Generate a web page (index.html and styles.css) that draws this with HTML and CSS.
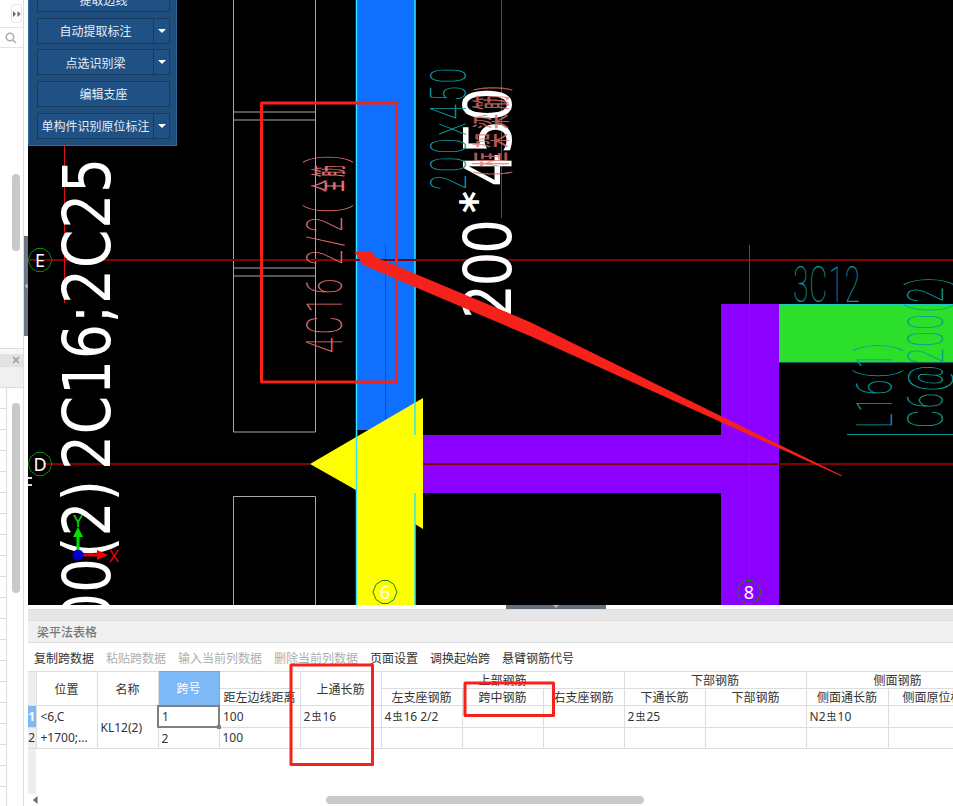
FILE: index.html
```html
<!DOCTYPE html>
<html lang="zh">
<head>
<meta charset="utf-8">
<title>梁平法表格</title>
<link rel="stylesheet" href="styles.css">
</head>
<body>
<div class="app">
  <aside class="side">
    <div class="side-col">
      <div class="pane-top">
        <div class="tool-row"><span class="expand"><svg width="8" height="6" viewBox="0 0 8 6"><path d="M0 0l3 3-3 3zM4.500 0l3 3-3 3z" fill="#666"/></svg></span></div>
        <div class="search-row"><svg width="12" height="12" viewBox="0 0 12 12"><circle cx="5" cy="5" r="3.800" fill="none" stroke="#aaa" stroke-width="1.500"/><path d="M8 8l3 3" stroke="#aaa" stroke-width="1.500"/></svg></div>
        <div class="thumb thumb-a"></div>
      </div>
      <div class="pane-gap"></div>
      <div class="pane-head"><svg width="8" height="8" viewBox="0 0 8 8"><path d="M1 1l6 6M7 1l-6 6" stroke="#999" stroke-width="1.500"/></svg></div>
      <div class="pane-sub"></div>
      <div class="pane-list">
        <div class="list-rows"></div>
        <div class="thumb thumb-b"></div>
      </div>
    </div>
    <div class="side-gutter"><div class="gutter-handle"><svg width="4" height="8" viewBox="0 0 4 8"><path d="M3.500 1L1 4l2.500 3z" fill="#c5ccd3"/></svg></div></div>
  </aside>

  <main class="main">
    <section class="canvas">
      <svg class="cad" viewBox="28 0 925 605" width="925" height="605">
        <!-- grey outlines -->
        <g class="outline">
          <path d="M233.500 0V432H315.500V0"/>
          <path d="M233.500 112H315.500M233.500 120H315.500M233.500 268H315.500M233.500 276H315.500"/>
          <path d="M233.500 605V496.500H315.500V605"/>
        </g>
        <!-- structural fills -->
        <rect x="356" y="0" width="59" height="430" fill="#0f70ff"/>
        <rect x="721" y="304" width="58" height="301" fill="#8b00ff"/>
        <rect x="423" y="435" width="298" height="58" fill="#8b00ff"/>
        <rect x="779" y="304" width="174" height="58" fill="#2bdf2b"/>
        <path d="M779 304.500H953M779 362H953" stroke="#19c8b8"/>
        <path d="M385.500 245V425" stroke="#c01030"/>
        <path d="M310 464L423 398V529L415 524V605H356V490Z" fill="#ffff00"/>
        <path d="M356.500 0V605M415 0V435M415 493V605" stroke="#2fe6ff" stroke-width="1.500"/>
        <!-- axis lines -->
        <path d="M28 260H953" stroke="#850000" stroke-width="2"/>
        <path d="M43 464H310M423 464H953" stroke="#850000" stroke-width="2"/>
        <path d="M64.500 0V303M501.500 0V218M749.500 245V605" stroke="#e01010" fill="none"/>
        <!-- big white labels -->
        <text class="big" transform="translate(110 470) rotate(-90) scale(1 1.200)" textLength="312">2C16;2C25</text>
        <text class="big" transform="translate(110 628) rotate(-90) scale(1 1.200)" textLength="148">00(2)</text>
        <rect x="28" y="477" width="4" height="2" fill="#ddd"/><rect x="28" y="484" width="4" height="2" fill="#ddd"/>
        <text class="big" transform="translate(511 319) rotate(-90) scale(1 1.200)" textLength="100">200</text>
        <text class="star" transform="translate(491 213) rotate(-90)">*</text>
        <text class="big" transform="translate(511 187) rotate(-90) scale(1 1.200)" textLength="100">450</text>
        <!-- thin CAD labels -->
        <text class="thin teal" transform="translate(466 190) rotate(-90) scale(1 1.800)" textLength="122">200x450</text>
        <text class="thin pink" transform="translate(342 353) rotate(-90) scale(1 1.800)" textLength="148">4C16 2/2(</text>
        <text class="cjk pink" transform="translate(342 192) rotate(-90) scale(1 3)" textLength="27">全筋</text>
        <text class="thin pink" transform="translate(342 163) rotate(-90) scale(1 1.800)">)</text>
        <text class="cjk-s pink soft" transform="translate(505 176) rotate(-90) scale(1 2.600)" textLength="90">(框架梁筋)</text>
        <text class="thin teal" transform="translate(793 302) scale(1 1.800)" textLength="67">3C12</text>
        <text class="thin teal" transform="translate(892 428) rotate(-90) scale(1 1.800)" textLength="85">L16(1)</text>
        <text class="thin teal" transform="translate(943 428) rotate(-90) scale(1 1.800)" textLength="151">C6@200(2)</text>
        <path d="M847 434.500H953" stroke="#0a9090"/>
        <!-- axis bubbles -->
        <g class="bubble">
          <polygon points="52,260 49,267.500 43,271.500 37,271.500 31,267.500 28,260 31,252.500 37,248.500 43,248.500 49,252.500"/>
          <polygon points="52,464 49,471.500 43,475.500 37,475.500 31,471.500 28,464 31,456.500 37,452.500 43,452.500 49,456.500"/>
          <polygon points="397,592 394,599.500 388,603.500 382,603.500 376,599.500 373,592 376,584.500 382,580.500 388,580.500 394,584.500"/>
          <polygon points="761,592 758,599.500 752,603.500 746,603.500 740,599.500 737,592 740,584.500 746,580.500 752,580.500 758,584.500"/>
        </g>
        <text class="bubble-t" x="40" y="267">E</text>
        <text class="bubble-t" x="40" y="471">D</text>
        <text class="bubble-t" x="385" y="599">6</text>
        <text class="bubble-t" x="749" y="599">8</text>
        <!-- UCS gizmo -->
        <path d="M76.500 555V535H79.500V555Z" fill="#00e000"/>
        <path d="M78 527L83 537H73Z" fill="#00e000"/>
        <path d="M78 553.500H98V556.500H78Z" fill="#f00000"/>
        <path d="M108 555L97 550V560Z" fill="#f00000"/>
        <circle cx="78" cy="555" r="5.500" fill="#0000c8"/>
        <text class="ucs green" x="78" y="527">Y</text>
        <text class="ucs red" x="114" y="562">X</text>
      </svg>

      <div class="float-panel">
        <div class="fp-row"><button class="fp-btn">提取边线</button></div>
        <div class="fp-row"><button class="fp-btn">自动提取标注</button><button class="fp-drop"><span class="caret"></span></button></div>
        <div class="fp-row"><button class="fp-btn">点选识别梁</button><button class="fp-drop"><span class="caret"></span></button></div>
        <div class="fp-row"><button class="fp-btn">编辑支座</button></div>
        <div class="fp-row"><button class="fp-btn">单构件识别原位标注</button><button class="fp-drop"><span class="caret"></span></button></div>
      </div>
    </section>

    <div class="split-strip"><div class="split-handle"><span class="split-caret"></span></div></div>

    <section class="panel">
      <div class="panel-band"></div>
      <div class="panel-title">梁平法表格</div>
      <div class="panel-tools">
        <span>复制跨数据</span><span class="off">粘贴跨数据</span><span class="off">输入当前列数据</span><span class="off">删除当前列数据</span><span>页面设置</span><span>调换起始跨</span><span>悬臂钢筋代号</span>
      </div>
      <div class="grid-wrap">
        <table class="grid">
          <colgroup>
            <col class="c-n"><col class="c-a"><col class="c-a"><col class="c-a"><col class="c-b"><col class="c-b"><col class="c-b"><col class="c-b"><col class="c-b"><col class="c-b"><col class="c-c"><col class="c-d"><col class="c-e">
          </colgroup>
          <tr class="r-h">
            <th class="rn" rowspan="2"></th>
            <th rowspan="2">位置</th>
            <th rowspan="2">名称</th>
            <th rowspan="2" class="sel-head">跨号</th>
            <th></th>
            <th rowspan="2">上通长筋</th>
            <th colspan="3">上部钢筋</th>
            <th colspan="2">下部钢筋</th>
            <th colspan="2">侧面钢筋</th>
          </tr>
          <tr class="r-h">
            <th>距左边线距离</th>
            <th>左支座钢筋</th>
            <th>跨中钢筋</th>
            <th>右支座钢筋</th>
            <th>下通长筋</th>
            <th>下部钢筋</th>
            <th>侧面通长筋</th>
            <th>侧面原位标注</th>
          </tr>
          <tr class="r-d">
            <td class="rn rn-on">1</td>
            <td rowspan="2" class="pos">&lt;6,C<br>+1700;...</td>
            <td rowspan="2">KL12(2)</td>
            <td class="cur">1<span class="fill-h"></span></td>
            <td>100</td>
            <td>2<span class="bar">虫</span>16</td>
            <td>4<span class="bar">虫</span>16 2/2</td>
            <td></td><td></td>
            <td>2<span class="bar">虫</span>25</td>
            <td></td>
            <td>N2<span class="bar">虫</span>10</td>
            <td></td>
          </tr>
          <tr class="r-d">
            <td class="rn">2</td>
            <td>2</td>
            <td>100</td>
            <td></td><td></td><td></td><td></td><td></td><td></td><td></td><td></td>
          </tr>
        </table>
        <div class="grid-fill"></div>
      </div>
      <div class="hscroll">
        <svg width="5" height="8" viewBox="0 0 5 8"><path d="M4.500 0L0 4l4.500 4z" fill="#5b6b7b"/></svg>
        <div class="hthumb"></div>
      </div>
    </section>
  </main>

  <svg class="marks" viewBox="0 0 953 806" width="953" height="806">
    <g class="mark-box">
      <rect x="261.500" y="103" width="135" height="279"/>
      <rect x="291" y="665" width="81.500" height="99.500"/>
      <rect x="465" y="683" width="88.500" height="32.500"/>
    </g>
    <path d="M355 252L372 251L375 257L530 322L842 475.500V476.500L530 336L375 270L363 265Z" fill="#f5211a"/>
  </svg>
</div>
</body>
</html>
```
FILE: styles.css
```css
* { box-sizing: border-box; }
html, body { margin: 0; padding: 0; background: #fff; }
body { font: 12px/1.2 "Noto Sans", "Noto Sans CJK SC", sans-serif; color: #333; }
.app { position: relative; display: flex; width: 953px; height: 806px; overflow: hidden; }

/* left strip */
.side { display: flex; flex: 0 0 28px; height: 806px; background: #fff; }
.side-col { display: flex; flex-direction: column; width: 24px; border-right: 1px solid #ddd; }
.side-gutter { width: 4px; padding-top: 236px; }
.gutter-handle { display: flex; align-items: center; justify-content: center; width: 4px; height: 100px; background: #6c7885; }
.pane-top { height: 349px; border-bottom: 1px solid #ddd; }
.tool-row { height: 28px; padding: 4px 0 0 11px; border-bottom: 1px solid #e4e4e4; }
.expand { display: flex; align-items: center; justify-content: center; width: 11px; height: 19px; border: 1px solid #e6e6e6; border-radius: 3px; }
.search-row { display: flex; align-items: center; height: 20px; padding-left: 5px; border-bottom: 1px solid #e4e4e4; }
.thumb { width: 8px; margin-left: 12px; background: #c9c9c9; border-radius: 4px; }
.thumb-a { height: 77px; margin-top: 126px; }
.pane-gap { height: 5px; background: #f7f7f7; }
.pane-head { display: flex; justify-content: flex-end; align-items: center; height: 12px; padding-right: 3px; background: #e3e3e3; }
.pane-sub { height: 22px; background: #f0f0f0; border-top: 1px solid #ddd; border-bottom: 1px solid #ddd; }
.pane-list { position: relative; flex: 1; display: flex; }
.list-rows { width: 7px; border-right: 1px solid #ddd; background: repeating-linear-gradient(#fff 0 20px, #ddd 20px 21px); }
.thumb-b { height: 190px; margin: 15px 0 0 5px; }

/* main */
.main { display: flex; flex-direction: column; flex: 1; min-width: 0; }
.canvas { position: relative; height: 605px; background: #000; overflow: hidden; }
.cad { display: block; }
.outline { fill: none; stroke: #a8a8a8; stroke-width: 1; }
.big { font: 55px "DejaVu Sans", sans-serif; fill: #fff; }
.star { font: bold 42px "DejaVu Sans", sans-serif; fill: #fff; }
.thin { font-family: Roboto, sans-serif; font-weight: 100; font-size: 28px; }
.cjk { font: 12px "Noto Sans CJK SC", sans-serif; }
.cjk-s { font: 15px "Noto Sans CJK SC", sans-serif; }
.teal { fill: #0a9a9a; }
.pink { fill: #e07070; }
.soft { fill-opacity: 0.8; }
.bubble polygon { fill: none; stroke: #0a8a0a; }
.bubble-t { font: 18px "Noto Sans", sans-serif; fill: #fff; text-anchor: middle; }
.ucs { font: 17px "Noto Sans", sans-serif; text-anchor: middle; }
.green { fill: #00e000; }
.red { fill: #f00000; }

.float-panel { position: absolute; left: 0; top: -16px; display: flex; flex-direction: column; gap: 5.670px; width: 149px; height: 162px; padding: 1px 6px 0 8px; background: #1f4d7c; border: 1px solid #2e6ba5; }
.fp-row { display: flex; height: 26px; flex: none; }
.fp-btn, .fp-drop { border: 1px solid #173b60; background: #1f5184; color: #e4eef8; font: 12px "Noto Sans CJK SC", sans-serif; padding: 0; }
.fp-btn { flex: 1; }
.fp-drop { display: flex; align-items: center; justify-content: center; flex: 0 0 16px; border-left: 0; }
.caret { border-left: 4px solid transparent; border-right: 4px solid transparent; border-top: 4px solid #fff; }

/* splitter + panel */
.split-strip { height: 4px; background: #fff; padding-left: 478px; }
.split-handle { display: flex; justify-content: center; width: 100px; height: 4px; background: #636f7b; }
.split-caret { border-left: 3px solid transparent; border-right: 3px solid transparent; border-top: 3px solid #bbb; }
.panel { display: flex; flex-direction: column; flex: 1; min-height: 0; }
.panel-band { height: 12px; background: #e6e6e6; border-top: 1px solid #ddd; border-bottom: 1px solid #ddd; }
.panel-title { height: 22px; padding-left: 9px; line-height: 21px; font-family: "Noto Sans CJK SC", sans-serif; font-weight: 500; color: #777; background: #f0f0f0; border-bottom: 1px solid #ddd; }
.panel-tools { display: flex; gap: 12px; align-items: center; height: 28px; padding: 2px 0 0 6px; font-family: "Noto Sans CJK SC", sans-serif; color: #333; }
.off { color: #aeaeae; }

.grid-wrap { display: flex; flex-direction: column; flex: 1; min-height: 0; overflow: hidden; }
.grid { table-layout: fixed; border-collapse: collapse; width: 961px; }
.c-n { width: 8px; } .c-a { width: 61px; } .c-b { width: 81px; } .c-c { width: 101px; } .c-d { width: 82px; } .c-e { width: 101px; }
.grid th, .grid td { padding: 0; border: 1px solid #ddd; white-space: nowrap; overflow: hidden; }
.grid th { font-weight: 400; font-family: "Noto Sans CJK SC", sans-serif; text-align: center; }
.grid td { padding-left: 3px; text-align: left; }
.r-h { height: 17px; line-height: 16px; }
.r-d { height: 21px; line-height: 19px; }
.grid .rn { background: #eee; padding: 0; text-align: center; border-left: 0; }
.grid .rn-on { background: #7db8f7; color: #fff; font-weight: 700; }
.grid .sel-head { background: #7db8f7; color: #fff; border-color: #6aa9ee; }
.grid .pos { line-height: 21px; padding-left: 4px; }
.grid .cur { position: relative; overflow: visible; border: 2px solid #808080; }
.fill-h { position: absolute; right: -3px; bottom: -3px; width: 4px; height: 4px; background: #808080; }
.bar { font: 10px "Noto Sans CJK SC", sans-serif; margin: 0 1px; vertical-align: 1px; }
.grid-fill { flex: 1; width: 8px; background: #eee; }
.hscroll { display: flex; align-items: center; flex: 0 0 12px; padding-left: 5px; }
.hthumb { width: 318px; height: 8px; margin-left: 288px; background: #c9c9c9; border-radius: 4px; }

/* red review marks drawn over the screenshot */
.marks { position: absolute; left: 0; top: 0; pointer-events: none; }
.mark-box rect { fill: none; stroke: #f5211a; stroke-width: 3; stroke-linejoin: round; }
```
